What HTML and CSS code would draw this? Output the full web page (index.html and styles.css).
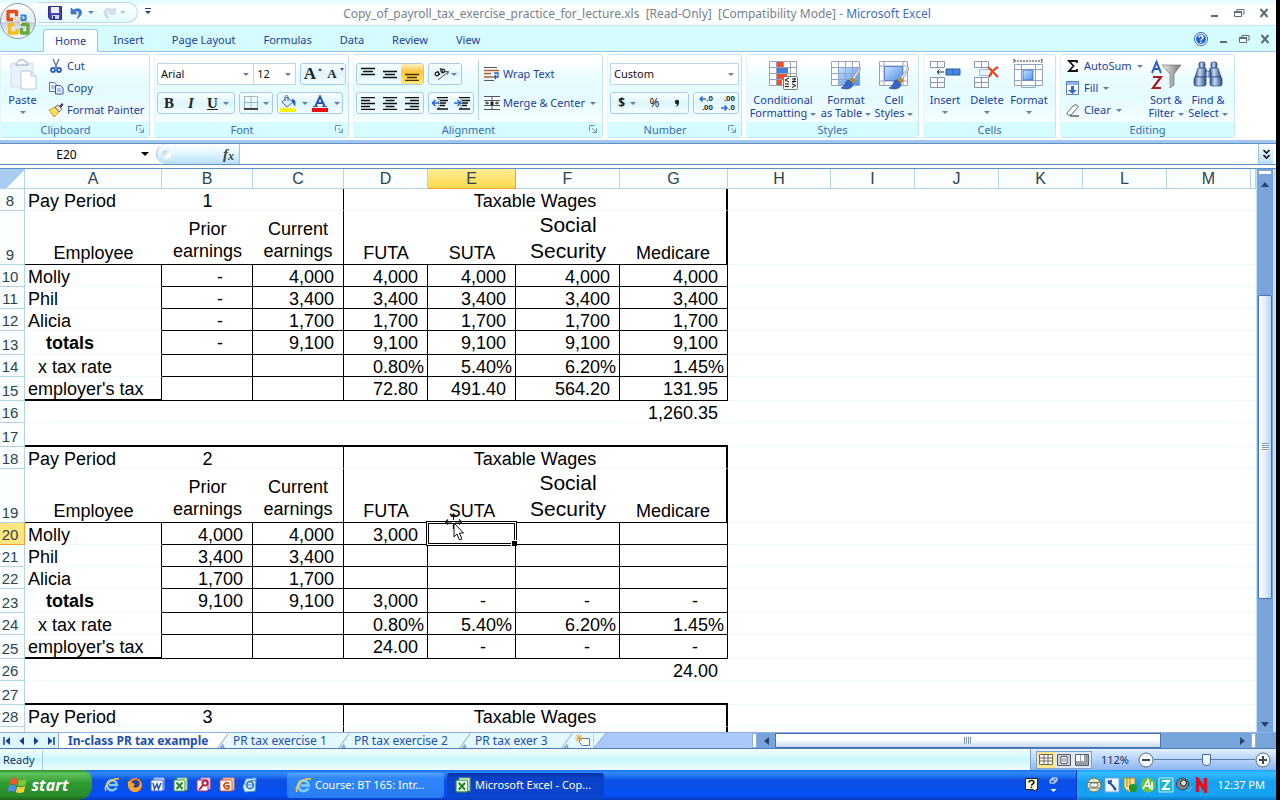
FILE: index.html
```html
<!DOCTYPE html>
<html lang="en">
<head>
  <meta charset="UTF-8">
  <meta name="viewport" content="width=device-width, initial-scale=1.0">
  <title>Copy_of_payroll_tax_exercise_practice_for_lecture.xls - Microsoft Excel</title>
  <link rel="stylesheet" href="styles.css">
</head>
<body>
  <!-- shared icons -->
  <svg class="defs" aria-hidden="true">
    <defs>
      <linearGradient id="orb" x1="0" y1="0" x2="0" y2="1"><stop offset="0" stop-color="#fff"/><stop offset=".5" stop-color="#e4e9f4"/><stop offset=".52" stop-color="#c3cde2"/><stop offset="1" stop-color="#fff"/></linearGradient>
      <linearGradient id="blue" x1="0" y1="0" x2="1" y2="1"><stop offset="0" stop-color="#c9e2ff"/><stop offset="1" stop-color="#4f8fe6"/></linearGradient>
      <linearGradient id="steel" x1="0" y1="0" x2="1" y2="0"><stop offset="0" stop-color="#2e4f86"/><stop offset=".4" stop-color="#c4dbf5"/><stop offset="1" stop-color="#27467c"/></linearGradient>
      <linearGradient id="grey" x1="0" y1="0" x2="1" y2="0"><stop offset="0" stop-color="#eee"/><stop offset="1" stop-color="#777"/></linearGradient>
    </defs>
    <symbol id="i-min" viewBox="0 0 12 12"><path d="M3 9h7" stroke="#5b6b78" stroke-width="2"/></symbol>
    <symbol id="i-restore" viewBox="0 0 12 12"><path d="M4 4V2.500h7V7H9.500" fill="none" stroke="#5b6b78"/><path d="M1.500 4.500h7v5h-7z" fill="#fff" stroke="#5b6b78"/><path d="M1 5h8" stroke="#5b6b78" stroke-width="2"/></symbol>
    <symbol id="i-close" viewBox="0 0 12 12"><path d="M2.500 2l7 8M9.500 2l-7 8" stroke="#5b6b78" stroke-width="2"/></symbol>
    <symbol id="i-launch" viewBox="0 0 9 9"><path d="M.5 6V.5H6M3 3l4 4M7.500 3.500v4h-4" fill="none" stroke="#6f93bd"/></symbol>
    <symbol id="i-brush" viewBox="0 0 20 24"><path d="M19 1l-8 11 2 2 7-11z" fill="#d9dde6" stroke="#7d8698" stroke-width=".6"/><path d="M11 11l4 3-3 4-4-3z" fill="#b98a3a"/><path d="M8 14c-4 0-3 6-8 8 5 2 12 1 12-4z" fill="#3766c4" stroke="#244a96" stroke-width=".6"/></symbol>
    <symbol id="i-ie" viewBox="0 0 16 16"><path d="M12.500 10.500A5 5 0 1 1 13 8H5" fill="none" stroke="#7fd0ff" stroke-width="2.500"/><path d="M2 14C-1 9 9 0 15 2" fill="none" stroke="#ffc63a" stroke-width="1.500"/></symbol>
    <symbol id="i-xl" viewBox="0 0 16 16"><path d="M4 1h10v12H4z" fill="#e5f6e0" stroke="#7fc06f"/><rect x="1" y="3" width="11" height="11" rx="1" fill="#f3fff0" stroke="#3a9338"/><path d="M3.500 5.500l6 6.500M9.500 5.500l-6 6.500" stroke="#238a2a" stroke-width="2"/></symbol>
    <symbol id="i-slash" viewBox="0 0 12 17"><path d="M0 17L12 0v17z" fill="#e3f8ff"/><path d="M0 17L12 .5" stroke="#7e9ecb"/><path d="M2 17l4-5 2 5z" fill="#8ea6d8"/></symbol>
  </svg>

  <header class="titlebar">
    <button class="office" aria-label="Office Button">
      <svg width="38" height="38" viewBox="0 0 38 38"><circle cx="18" cy="19" r="17.500" fill="url(#orb)" stroke="#8a94ab"/><path d="M1 20c8-3 26-3 34 0" stroke="#fff" fill="none"/>
        <g fill="none" stroke-width="3.400" stroke-linejoin="round"><path d="M13 17.500H8V9.500H16.500V14" stroke="#e2501d"/><path d="M20.500 13.500h5v4.500H21.500v-3" stroke="#2f86d8" stroke-width="2.200"/><path d="M14.500 22.500H9.500v8.500h7.500v-4" stroke="#f2bd20"/><path d="M21.500 26v5h6.500v-8.500H21" stroke="#62ac3c"/></g>
        <path d="M15 15h3v3h-3zM19 19h3v3h-3z" fill="#fff" stroke="#d08a40" stroke-width=".6"/></svg>
    </button>
    <div class="quick">
      <button aria-label="Save"><svg width="14" height="14" viewBox="0 0 14 14"><path d="M.5.500h13v13H2l-1.500-2z" fill="#4646b8" stroke="#2a2a86"/><path d="M3 1h8v6H3z" fill="#eef3ff"/><path d="M4 9h7v4H4z" fill="#cfd3e8"/><path d="M5 10h2v3H5z" fill="#2a2a86"/></svg></button>
      <button aria-label="Undo"><svg width="14" height="14" viewBox="0 0 14 14"><path d="M1 2v6h6L5 6c3-2.500 6 .5 2 6.500C14 9 13-.5 3.500 4z" fill="#3e78d8" stroke="#2c5fb8" stroke-width=".6"/></svg><i class="caret"></i></button>
      <button aria-label="Redo"><svg width="14" height="14" viewBox="0 0 14 14"><path d="M13 2v6H7l2-2C6 3.500 3 6.500 6 12.500 0 9 1-.5 10.500 4z" fill="#dbe4f1" stroke="#b6c4da" stroke-width=".8"/></svg><i class="caret faint"></i></button>
    </div>
    <button class="more" aria-label="Customize Quick Access Toolbar"><i class="caret navy"></i></button>
    <h1 class="title">Copy_of_payroll_tax_exercise_practice_for_lecture.xls &nbsp;[Read-Only] &nbsp;[Compatibility Mode] - <span>Microsoft Excel</span></h1>
    <div class="win">
      <button aria-label="Minimize"><svg width="12" height="12"><use href="#i-min"/></svg></button>
      <button aria-label="Restore"><svg width="12" height="12"><use href="#i-restore"/></svg></button>
      <button aria-label="Close"><svg width="12" height="12"><use href="#i-close"/></svg></button>
    </div>
  </header>

  <nav class="tabs">
    <button class="tab on">Home</button>
    <button class="tab">Insert</button>
    <button class="tab">Page Layout</button>
    <button class="tab">Formulas</button>
    <button class="tab">Data</button>
    <button class="tab">Review</button>
    <button class="tab">View</button>
    <div class="win small">
      <button aria-label="Help"><svg width="14" height="14" viewBox="0 0 14 14"><circle cx="7" cy="7" r="6.500" fill="#fff" stroke="#2d62c4"/><circle cx="7" cy="7" r="5" fill="#2463d6"/><path d="M5 5.500c0-3 4-2.500 4 0C9 7 7 6.500 7 8.500M7 9.500v1.500" fill="none" stroke="#fff" stroke-width="1.400"/></svg></button>
      <button aria-label="Minimize window"><svg width="12" height="12"><use href="#i-min"/></svg></button>
      <button aria-label="Restore window"><svg width="12" height="12"><use href="#i-restore"/></svg></button>
      <button aria-label="Close window"><svg width="12" height="12"><use href="#i-close"/></svg></button>
    </div>
  </nav>

  <div class="ribbon">
    <section class="group g-clip">
      <div class="tools">
        <button class="big"><svg width="30" height="32" viewBox="0 0 30 32"><path d="M3 4h22v24H3z" fill="#e9f1fa" stroke="#d3dfec"/><path d="M8 5c0-2 3-2 3-4h5c0 2 4 2 4 4v1H8z" fill="#fff" stroke="#8fa5c2"/><path d="M13 12h10l5 5v13H13z" fill="#fff" stroke="#b9c8dc"/><path d="M23 12v5h5" fill="#e5edf7" stroke="#b9c8dc"/></svg><span>Paste</span><i class="caret"></i></button>
        <div class="col">
          <button class="line"><svg width="16" height="16" viewBox="0 0 16 16"><path d="M5 1l4 9M11 1L7 10" stroke="#6b7f9b" stroke-width="1.500"/><circle cx="5" cy="12" r="2" fill="none" stroke="#2e5fc0" stroke-width="1.800"/><circle cx="11" cy="12" r="2" fill="none" stroke="#2e5fc0" stroke-width="1.800"/></svg>Cut</button>
          <button class="line"><svg width="16" height="16" viewBox="0 0 16 16"><path d="M1.500 2.500h5l2 2v7h-7z" fill="#fff" stroke="#5576b4"/><path d="M3 6h4M3 8h4" stroke="#5b8be0"/><path d="M7.500 5.500h5l2.500 2.500v6h-7.500z" fill="#f0f6ff" stroke="#35579e"/><path d="M9 9h4M9 11h4" stroke="#5b8be0"/></svg>Copy</button>
          <button class="line"><svg width="16" height="16" viewBox="0 0 16 16"><path d="M1 8l6-3 4 5-5 5C4 12 3 10 1 8z" fill="#ffe05a" stroke="#c99a1e"/><path d="M7 5l3-2 4 4-3 3z" fill="#e8e4d8" stroke="#776"/><path d="M11 4l3-3 1.500 1.500L13 6z" fill="#4b3d6e"/></svg>Format Painter</button>
        </div>
      </div>
      <h2 class="opens">Clipboard<svg width="9" height="9"><use href="#i-launch"/></svg></h2>
    </section>

    <section class="group g-font">
      <div class="tools rows">
        <div class="row tight">
          <label class="combo w-font"><select aria-label="Font"><option>Arial</option></select></label>
          <label class="combo w-size"><select aria-label="Font size"><option>12</option></select></label>
          <div class="box push">
            <button class="serif s16" aria-label="Grow font">A<i class="mark up"></i></button>
            <button class="serif s12" aria-label="Shrink font">A<i class="mark"></i></button>
          </div>
        </div>
        <div class="row">
          <div class="box">
            <button class="serif">B</button>
            <button class="serif"><i>I</i></button>
            <button class="serif arrow"><u>U</u><i class="caret"></i></button>
          </div>
          <div class="box"><button class="arrow" aria-label="Borders"><svg width="14" height="14" viewBox="0 0 14 14"><path d="M.5.500h13v12H.5zM7 .5v12M.5 6.500h13" fill="none" stroke="#777" stroke-dasharray="1 1"/><path d="M0 13h14" stroke="#111" stroke-width="1.500"/></svg><i class="caret"></i></button></div>
          <div class="box">
            <button class="arrow" aria-label="Fill color"><svg width="17" height="17" viewBox="0 0 17 17"><path d="M7 2l6 5-6 5-5-5z" fill="#dfeafc" stroke="#46669e"/><path d="M5 6V2c0-2 3-2 3 0v4" fill="none" stroke="#46669e"/><path d="M12 4c4 0 4 4 3 8-1-2-2-4-3-5z" fill="#2d62c4"/><path d="M0 13h16v4H0z" fill="#fbf215"/></svg><i class="caret"></i></button>
            <button class="arrow" aria-label="Font color"><svg width="17" height="17" viewBox="0 0 17 17"><path d="M3.500 11L8 1.500l4.500 9.500M5 8h6" fill="none" stroke="#2a55ae" stroke-width="2"/><path d="M1 11.500h5M10 11.500h5" stroke="#2a55ae"/><path d="M0 13h16v4H0z" fill="#e80d0d"/></svg><i class="caret"></i></button>
          </div>
        </div>
      </div>
      <h2 class="opens">Font<svg width="9" height="9"><use href="#i-launch"/></svg></h2>
    </section>

    <section class="group g-align">
      <div class="tools">
        <div class="rows">
          <div class="row">
            <div class="box">
              <button aria-label="Top align"><svg width="14" height="14" viewBox="0 0 14 14"><path d="M0 1.500h14M2 4.500h10M0 7.500h14" stroke="#111" stroke-width="1.500"/></svg></button>
              <button aria-label="Middle align"><svg width="14" height="14" viewBox="0 0 14 14"><path d="M0 4.500h14M2 7.500h10M0 10.500h14" stroke="#111" stroke-width="1.500"/></svg></button>
              <button class="hot" aria-label="Bottom align"><svg width="14" height="14" viewBox="0 0 14 14"><path d="M0 7.500h14M2 10.500h10M0 13.500h14" stroke="#4a3200" stroke-width="1.500"/></svg></button>
            </div>
            <div class="box"><button class="arrow" aria-label="Orientation"><svg width="15" height="14" viewBox="0 0 15 14"><path d="M4 13L14 5M11 4.500l3.500 0-1 3" fill="none" stroke="#556"/><g fill="none" stroke="#222" stroke-width="1.300"><circle cx="3" cy="7" r="1.800"/><path d="M3.500 4l2.500 4M6 1l3.500 5"/><circle cx="8.800" cy="4" r="1.800"/></g></svg><i class="caret near"></i></button></div>
          </div>
          <div class="row">
            <div class="box">
              <button aria-label="Align left"><svg width="14" height="13" viewBox="0 0 14 13"><path d="M0 .5h14M0 3.500h9M0 6.500h14M0 9.500h9M0 12.500h14" stroke="#111" stroke-width="1.500"/></svg></button>
              <button aria-label="Center"><svg width="14" height="13" viewBox="0 0 14 13"><path d="M0 .5h14M2.500 3.500h9M0 6.500h14M2.500 9.500h9M0 12.500h14" stroke="#111" stroke-width="1.500"/></svg></button>
              <button aria-label="Align right"><svg width="14" height="13" viewBox="0 0 14 13"><path d="M0 .5h14M5 3.500h9M0 6.500h14M5 9.500h9M0 12.500h14" stroke="#111" stroke-width="1.500"/></svg></button>
            </div>
            <div class="box">
              <button aria-label="Decrease indent"><svg width="16" height="13" viewBox="0 0 16 13"><path d="M5 .5h11M8 3.500h8M8 6h6M8 8.500h5M5 12h11" stroke="#111" stroke-width="1.400"/><path d="M7 6H1M3.500 3L.5 6l3 3" fill="none" stroke="#2d6bd8" stroke-width="1.600"/><path d="M7 0v13" stroke="#333" stroke-dasharray="1 1"/></svg></button>
              <button aria-label="Increase indent"><svg width="16" height="13" viewBox="0 0 16 13"><path d="M5 .5h11M8 3.500h8M8 6h6M8 8.500h5M5 12h11" stroke="#111" stroke-width="1.400"/><path d="M0 6h6M3.500 3l3 3-3 3" fill="none" stroke="#2d6bd8" stroke-width="1.600"/><path d="M7 0v13" stroke="#333" stroke-dasharray="1 1"/></svg></button>
            </div>
          </div>
        </div>
        <div class="rows wide">
          <button class="line"><svg width="16" height="16" viewBox="0 0 16 16"><path d="M0 1.500h13M0 14.500h10" stroke="#555"/><path d="M0 4.500h15M0 7.500h7M0 11h9" stroke="#b0602a" stroke-width="1.500"/><path d="M10 7h4v4h-3M12 9l-2 2 2 2" fill="none" stroke="#2d5bb8" stroke-width="1.300"/></svg>Wrap Text</button>
          <button class="line"><svg width="16" height="16" viewBox="0 0 16 16"><path d="M.5 1.500h15v13H.5z" fill="#fff"/><path d="M0 1.500h16M0 5.500h16M0 10.500h16M0 14.500h16M8 1v4M8 11v4" stroke="#46556e"/><path d="M1 8h4M15 8h-4M3 6.500v3M13 6.500v3" stroke="#222"/><path d="M6.500 6.500h3v3.500h-3z" fill="#222"/></svg>Merge &amp; Center<i class="caret"></i></button>
        </div>
      </div>
      <h2 class="opens">Alignment<svg width="9" height="9"><use href="#i-launch"/></svg></h2>
    </section>

    <section class="group g-num">
      <div class="tools rows">
        <label class="combo"><select aria-label="Number format"><option>Custom</option></select></label>
        <div class="row">
          <div class="box grow">
            <button class="bold arrow">$<i class="caret"></i></button>
            <button>%</button>
            <button class="bold" aria-label="Comma style"><svg width="6" height="9" viewBox="0 0 6 9"><circle cx="3" cy="3" r="2.200" fill="#222"/><path d="M5 3c0 3-1 4-3 5 1-2 1-3 1-4z" fill="#222"/></svg></button>
          </div>
          <div class="box">
            <button class="dec"><span><svg width="7" height="6" viewBox="0 0 7 6"><path d="M7 3H1M3.500 .5L1 3l2.500 2.500" fill="none" stroke="#2d6bd8" stroke-width="1.500"/></svg>.0</span><span>.00</span></button>
            <button class="dec"><span>.00</span><span><svg width="7" height="6" viewBox="0 0 7 6"><path d="M0 3h6M3.500 .5L6 3 3.500 5.500" fill="none" stroke="#2d6bd8" stroke-width="1.500"/></svg>.0</span></button>
          </div>
        </div>
      </div>
      <h2 class="opens">Number<svg width="9" height="9"><use href="#i-launch"/></svg></h2>
    </section>

    <section class="group g-styles">
      <div class="tools">
        <button class="big w-cond"><svg width="30" height="32" viewBox="0 0 30 32"><path d="M1.500 2.500h27v24h-27zM8.500 2v24M15.500 2v24M22.500 2v24M2 8.500h26M2 14.500h26M2 20.500h26" fill="#fff" stroke="#97a3bd"/><path d="M9 3h6v5H9zM9 15h10v5H9zM9 21h5v5H9z" fill="#f4512b"/><path d="M9 9h11v5H9z" fill="#3f7fe0"/><rect x="15.500" y="17.500" width="14" height="13" rx="1" fill="#f4f4f4" stroke="#777"/><path d="M21 19l-4 2 4 2M17 25h4M17 27.500h4M24 20h4M24 22.500h4M27 19l-2 5M24 25l4 1.500-4 2" fill="none" stroke="#111"/></svg><span>Conditional</span><span>Formatting<i class="caret"></i></span></button>
        <button class="big w-table"><svg width="32" height="32" viewBox="0 0 32 32"><path d="M1.500 2.500h28v24h-28z" fill="#fff" stroke="#97a3bd"/><path d="M8 9h21v17H8z" fill="url(#blue)"/><path d="M8.500 2v24M15.500 2v24M22.500 2v24M2 8.500h27M2 14.500h27M2 20.500h27" stroke="#8fa4c8"/><use href="#i-brush" x="11" y="7" width="20" height="24"/></svg><span>Format</span><span>as Table<i class="caret"></i></span></button>
        <button class="big w-cell"><svg width="32" height="32" viewBox="0 0 32 32"><path d="M1.500 2.500h28v24h-28zM6 2v24M25 2v24M2 7h27M2 22h27" fill="#fff" stroke="#97a3bd"/><path d="M6.500 7.500h18v14h-18z" fill="url(#blue)" stroke="#5c84c4"/><use href="#i-brush" x="11" y="7" width="20" height="24"/></svg><span>Cell</span><span>Styles<i class="caret"></i></span></button>
      </div>
      <h2>Styles</h2>
    </section>

    <section class="group g-cells">
      <div class="tools">
        <button class="big w-cell"><svg width="32" height="32" viewBox="0 0 32 32"><path d="M1.500 2.500h14v6h-14zM8.500 2v6M1.500 18.500h14v10h-14zM8.500 18v10M1.500 23.500h14" fill="#fff" stroke="#8b97b0"/><path d="M17 10h14v6H17z" fill="#4a86e0" stroke="#2c5cae"/><path d="M24 10v6" stroke="#2c5cae"/><path d="M15 13H8M10.500 10.500L8 13l2.500 2.500" fill="none" stroke="#223"/></svg><span>Insert</span><i class="caret"></i></button>
        <button class="big w-cell"><svg width="32" height="32" viewBox="0 0 32 32"><path d="M3.500 2.500h14v6h-14zM10.500 2v6M3.500 18.500h14v10h-14zM10.500 18v10M3.500 23.500h14" fill="#fff" stroke="#8b97b0"/><path d="M8.500 10.500h12v6h-12z" fill="#eaf2ff" stroke="#4a86e0" stroke-dasharray="1 1"/><path d="M17 8l10 10M27 8c-4 2-7 6-9 10" stroke="#f0401c" stroke-width="2.200" fill="none"/></svg><span>Delete</span><i class="caret"></i></button>
        <button class="big w-cell"><svg width="32" height="32" viewBox="0 0 32 32"><path d="M1 2h28M1 0v4M29 0v4" stroke="#333" stroke-dasharray="2 1"/><path d="M1.500 5.500h28v21h-28zM8.500 5v23M22.500 5v23M2 10.500h27M2 21.500h27M8.500 28.500h14" fill="#fff" stroke="#97a3bd"/><path d="M10 11h10v10H10z" fill="url(#blue)" stroke="#3f7fe0"/></svg><span>Format</span><i class="caret"></i></button>
      </div>
      <h2>Cells</h2>
    </section>

    <section class="group g-edit">
      <div class="tools">
        <div class="col">
          <button class="line"><svg width="16" height="16" viewBox="0 0 16 16"><path d="M12 5V3H4l4.500 5L4 13h8v-2" fill="none" stroke="#111" stroke-width="1.800"/></svg>AutoSum<i class="caret"></i></button>
          <button class="line"><svg width="16" height="16" viewBox="0 0 16 16"><path d="M1.500 1.500h12v13h-12z" fill="#fff" stroke="#5b7dbb"/><path d="M2 2h11v3H2z" fill="#8fb4ee"/><path d="M6 6h3v4h3l-4.500 4L3 10h3z" fill="#2d6bd8"/></svg>Fill<i class="caret"></i></button>
          <button class="line"><svg width="16" height="16" viewBox="0 0 16 16"><path d="M2 11l6-7c2-2 6-1 5 1l-6 7c-2 2-6 1-5-1z" fill="#fff" stroke="#57627a"/><path d="M5 14h9" stroke="#111"/></svg>Clear<i class="caret"></i></button>
        </div>
        <button class="big w-cell"><svg width="32" height="32" viewBox="0 0 32 32"><path d="M2 14L6.500 3 11 14M4 10h5" fill="none" stroke="#2d5fc4" stroke-width="2"/><path d="M3 18h8L3 29h8" fill="none" stroke="#a81c24" stroke-width="2.200"/><path d="M12 6h19l-7 9v11l-4 3V15z" fill="url(#grey)" stroke="#777" stroke-width=".7"/></svg><span>Sort &amp;</span><span>Filter<i class="caret"></i></span></button>
        <button class="big w-cell"><svg width="32" height="32" viewBox="0 0 32 32"><g fill="url(#steel)" stroke="#27467c" stroke-width=".7"><rect x="7" y="3" width="6" height="6" rx="2"/><rect x="19" y="3" width="6" height="6" rx="2"/><path d="M6 9h8l1 9H3z"/><path d="M18 9h8l3 9H17z"/><rect x="2" y="18" width="12" height="9" rx="2"/><rect x="18" y="18" width="12" height="9" rx="2"/><path d="M13 12h6v6h-6z"/></g></svg><span>Find &amp;</span><span>Select<i class="caret"></i></span></button>
      </div>
      <h2>Editing</h2>
    </section>
  </div>

  <div class="formula">
    <input class="name" type="text" value="E20" aria-label="Name Box">
    <i class="caret black"></i>
    <div class="fx"><i class="dot"></i><button aria-label="Insert Function"><i>f</i><small><i>x</i></small></button></div>
    <input class="entry" type="text" aria-label="Formula Bar">
    <button class="expand" aria-label="Expand Formula Bar"><svg width="9" height="11" viewBox="0 0 9 11"><path d="M1.500 1l3 3 3-3M1.500 6l3 3 3-3" fill="none" stroke="#111" stroke-width="1.600"/></svg></button>
  </div>

  <main class="work">
    <div class="sheet">
      <table>
        <colgroup><col class="c-row"><col class="c-a"><col class="c-b"><col class="c-b"><col class="c-d"><col class="c-e"><col class="c-f"><col class="c-g"><col class="c-h"><col class="c-d"><col class="c-d"><col class="c-d"><col class="c-d"><col class="c-d"><col></colgroup>
        <thead>
          <tr><th class="corner"></th><th>A</th><th>B</th><th>C</th><th>D</th><th class="sel">E</th><th>F</th><th>G</th><th>H</th><th>I</th><th>J</th><th>K</th><th>L</th><th>M</th><th></th></tr>
        </thead>
        <tbody>
          <tr><th>8</th><td>Pay Period</td><td class="mid">1</td><td class="r"></td><td class="mid rr" colspan="4">Taxable Wages</td><td colspan="7"></td></tr>
          <tr class="names"><th>9</th><td class="b">Employee</td><td class="b two">Prior<br>earnings</td><td class="b r two">Current<br>earnings</td><td class="b">FUTA</td><td class="b">SUTA</td><td class="b large">Social<br>Security</td><td class="b rr">Medicare</td><td colspan="7"></td></tr>
          <tr class="data"><th>10</th><td>Molly</td><td class="dash">-</td><td>4,000</td><td>4,000</td><td>4,000</td><td>4,000</td><td>4,000</td><td colspan="7"></td></tr>
          <tr class="data"><th>11</th><td>Phil</td><td class="dash">-</td><td>3,400</td><td>3,400</td><td>3,400</td><td>3,400</td><td>3,400</td><td colspan="7"></td></tr>
          <tr class="data"><th>12</th><td>Alicia</td><td class="dash">-</td><td>1,700</td><td>1,700</td><td>1,700</td><td>1,700</td><td>1,700</td><td colspan="7"></td></tr>
          <tr class="data tall"><th>13</th><td class="total">totals</td><td class="dash">-</td><td>9,100</td><td>9,100</td><td>9,100</td><td>9,100</td><td>9,100</td><td colspan="7"></td></tr>
          <tr class="data pct"><th>14</th><td class="rate">x tax rate</td><td></td><td></td><td>0.80%</td><td>5.40%</td><td>6.20%</td><td>1.45%</td><td colspan="7"></td></tr>
          <tr class="data tall"><th>15</th><td class="bb">employer's tax</td><td></td><td></td><td>72.80</td><td>491.40</td><td>564.20</td><td>131.95</td><td colspan="7"></td></tr>
          <tr><th>16</th><td colspan="6"></td><td class="num">1,260.35</td><td colspan="7"></td></tr>
          <tr class="tall"><th>17</th><td class="bb" colspan="7"></td><td colspan="7"></td></tr>
          <tr><th>18</th><td>Pay Period</td><td class="mid">2</td><td class="r"></td><td class="mid rr" colspan="4">Taxable Wages</td><td colspan="7"></td></tr>
          <tr class="names"><th>19</th><td class="b">Employee</td><td class="b two">Prior<br>earnings</td><td class="b r two">Current<br>earnings</td><td class="b">FUTA</td><td class="b">SUTA</td><td class="b large">Social<br>Security</td><td class="b rr">Medicare</td><td colspan="7"></td></tr>
          <tr class="data"><th class="sel">20</th><td>Molly</td><td>4,000</td><td>4,000</td><td>3,000</td>
            <td class="active"><div class="cursor-box"></div><svg class="pointer" width="24" height="30" viewBox="0 0 24 30"><path d="M2 9h6M11 9h6M9.500 1v6M9.500 11v5M4 6.500L1.500 9 4 11.500M15 6.500L17.500 9 15 11.500M7 3.500L9.500 1 12 3.500" fill="none" stroke="#111" stroke-width="1.200"/><path d="M10 10v14l3-3 2.500 6 2.500-1-2.500-6h4z" fill="#fff" stroke="#111"/></svg></td>
            <td></td><td></td><td colspan="7"></td></tr>
          <tr class="data"><th>21</th><td>Phil</td><td>3,400</td><td>3,400</td><td></td><td></td><td></td><td></td><td colspan="7"></td></tr>
          <tr class="data"><th>22</th><td>Alicia</td><td>1,700</td><td>1,700</td><td></td><td></td><td></td><td></td><td colspan="7"></td></tr>
          <tr class="data tall"><th>23</th><td class="total">totals</td><td>9,100</td><td>9,100</td><td>3,000</td><td class="dash">-</td><td class="dash">-</td><td class="dash">-</td><td colspan="7"></td></tr>
          <tr class="data pct"><th>24</th><td class="rate">x tax rate</td><td></td><td></td><td>0.80%</td><td>5.40%</td><td>6.20%</td><td>1.45%</td><td colspan="7"></td></tr>
          <tr class="data tall"><th>25</th><td class="bb">employer's tax</td><td></td><td></td><td>24.00</td><td class="dash">-</td><td class="dash">-</td><td class="dash">-</td><td colspan="7"></td></tr>
          <tr><th>26</th><td colspan="6"></td><td class="num">24.00</td><td colspan="7"></td></tr>
          <tr class="tall"><th>27</th><td class="bb" colspan="7"></td><td colspan="7"></td></tr>
          <tr><th>28</th><td>Pay Period</td><td class="mid">3</td><td class="r"></td><td class="mid rr" colspan="4">Taxable Wages</td><td colspan="7"></td></tr>
          <tr><th></th><td colspan="3" class="r"></td><td colspan="4" class="rr"></td><td colspan="7"></td></tr>
        </tbody>
      </table>
    </div>
    <div class="vscroll">
      <div class="split"></div>
      <button aria-label="Scroll up"><i class="tri up"></i></button>
      <div class="track"><div class="thumb"><i></i></div></div>
      <button aria-label="Scroll down"><i class="tri down"></i></button>
    </div>
  </main>

  <div class="sheetbar">
    <div class="steps">
      <button aria-label="First sheet"><svg width="8" height="8" viewBox="0 0 8 8"><path d="M1 0v8" stroke="#123c9c" stroke-width="1.500"/><path d="M7 0v8L2.500 4z" fill="#123c9c"/></svg></button>
      <button aria-label="Previous sheet"><svg width="8" height="8" viewBox="0 0 8 8"><path d="M6 0v8L1.500 4z" fill="#123c9c"/></svg></button>
      <button aria-label="Next sheet"><svg width="8" height="8" viewBox="0 0 8 8"><path d="M2 0v8l4.500-4z" fill="#123c9c"/></svg></button>
      <button aria-label="Last sheet"><svg width="8" height="8" viewBox="0 0 8 8"><path d="M7 0v8" stroke="#123c9c" stroke-width="1.500"/><path d="M1 0v8l4.500-4z" fill="#123c9c"/></svg></button>
    </div>
    <button class="leaf on">In-class PR tax example</button>
    <svg class="white" width="12" height="17"><use href="#i-slash"/></svg>
    <button class="leaf">PR tax exercise 1</button>
    <svg width="12" height="17"><use href="#i-slash"/></svg>
    <button class="leaf">PR tax exercise 2</button>
    <svg width="12" height="17"><use href="#i-slash"/></svg>
    <button class="leaf short">PR tax exer 3</button>
    <svg width="12" height="17"><use href="#i-slash"/></svg>
    <button class="leaf new" aria-label="Insert Worksheet"><svg width="16" height="13" viewBox="0 0 16 13"><path d="M4.500 4.500h10v7h-7l-3-3z" fill="#fff" stroke="#5c77b0"/><path d="M4 0v8M0 4h8M1 1l6 6M7 1L1 7" stroke="#e8a22c"/></svg></button>
    <svg class="end" width="14" height="17" viewBox="0 0 14 17"><path d="M0 0h14L0 17z" fill="#e3f8ff"/><path d="M14 0L0 17" stroke="#7e9ecb"/></svg>
    <div class="hscroll">
      <div class="split"></div>
      <button aria-label="Scroll left"><i class="tri left"></i></button>
      <div class="track"><div class="thumb"><i></i></div></div>
      <button aria-label="Scroll right"><i class="tri right"></i></button>
      <div class="split"></div>
    </div>
  </div>

  <footer class="status">
    <span class="ready">Ready</span>
    <div class="view">
      <div class="modes">
        <button class="on" aria-label="Normal"><svg width="14" height="12" viewBox="0 0 14 12"><path d="M.5.500h13v10H.5zM5 1v10M9 1v10M1 4h12M1 7h12" fill="#fff" stroke="#6c6a55"/></svg></button>
        <button aria-label="Page Layout view"><svg width="14" height="12" viewBox="0 0 14 12"><path d="M.5.500h13v11H.5z" fill="#ccd0d4" stroke="#55606a"/><path d="M4 2.500h6v7H4z" fill="#fff" stroke="#55606a"/><path d="M5 5h4M5 7h4" stroke="#888"/></svg></button>
        <button aria-label="Page Break Preview"><svg width="14" height="12" viewBox="0 0 14 12"><path d="M.5.500h13v11H.5z" fill="#9aa0a6" stroke="#55606a"/><path d="M1 1h4v6H1zM6 1h3v6H6z" fill="#fff"/></svg></button>
      </div>
      <span class="pc">112%</span>
      <button class="round" aria-label="Zoom out"><svg width="16" height="16" viewBox="0 0 16 16"><circle cx="8" cy="8" r="7" fill="#f4f9ff" stroke="#596c86"/><path d="M4 8h8" stroke="#445" stroke-width="2"/></svg></button>
      <input type="range" min="10" max="190" value="103" aria-label="Zoom">
      <button class="round" aria-label="Zoom in"><svg width="16" height="16" viewBox="0 0 16 16"><circle cx="8" cy="8" r="7" fill="#f4f9ff" stroke="#596c86"/><path d="M4 8h8M8 4v8" stroke="#445" stroke-width="2"/></svg></button>
    </div>
  </footer>

  <div class="taskbar">
    <button class="start"><svg width="20" height="20" viewBox="0 0 20 20"><path d="M3 4c3-2 5-1 7 0L8.500 10c-2-1-4-1.500-7 0z" fill="#f2572b"/><path d="M11 4.500c3 1 5 1 8-.5l-1.500 6c-3 1.500-5 1-8 .3z" fill="#7cc63c"/><path d="M1.200 11c3-1.500 5-1 7 .3L6.700 17c-2-1-4-1.500-7 0z" fill="#4d8df0"/><path d="M9.300 11.500c3 1 5 1 8-.5l-1.500 6c-3 1.500-5 1-8 .3z" fill="#fbd035"/></svg>start</button>
    <div class="launch">
      <button aria-label="Internet Explorer"><svg width="16" height="16"><use href="#i-ie"/></svg></button>
      <button aria-label="Firefox"><svg width="16" height="16" viewBox="0 0 16 16"><circle cx="8" cy="8" r="7" fill="#f08a1d"/><circle cx="8.500" cy="7" r="4" fill="#2b3f94"/><path d="M1 4c3 1 4 2 7 3l-2 3c4 2 7-1 8-5 2 5-1 10-6 10S0 10 1 4z" fill="#f9a62c"/></svg></button>
      <button aria-label="Word"><svg width="16" height="16" viewBox="0 0 16 16"><path d="M4 1h10v12H4z" fill="#e6eefc" stroke="#8aaae8"/><rect x="1" y="3" width="12" height="11" rx="1" fill="#f5f8ff" stroke="#3d64b8"/><path d="M3 6l1.500 6L7 7l1.500 5L11 6" fill="none" stroke="#2c56b0" stroke-width="1.500"/></svg></button>
      <button aria-label="Excel"><svg width="16" height="16"><use href="#i-xl"/></svg></button>
      <button aria-label="Access"><svg width="16" height="16" viewBox="0 0 16 16"><path d="M5 1h9v11H5z" fill="#fbe3ec" stroke="#d888a4"/><rect x="1" y="3" width="11" height="11" rx="1" fill="#fff" stroke="#b8305c"/><circle cx="9" cy="6" r="2.500" fill="none" stroke="#b8204c" stroke-width="2"/><path d="M7 8l-4 5" stroke="#b8204c" stroke-width="2"/></svg></button>
      <button aria-label="PowerPoint"><svg width="16" height="16" viewBox="0 0 16 16"><path d="M4 1h11v12H4z" fill="#fbe0d0" stroke="#e88a5c"/><rect x="1" y="3" width="12" height="11" rx="1" fill="#fff" stroke="#d8501c"/><path d="M10 6.500a3 3 0 1 0 0 4.500V9H7" fill="none" stroke="#d8501c" stroke-width="1.800"/></svg></button>
      <button aria-label="Outlook Express"><svg width="16" height="16" viewBox="0 0 16 16"><path d="M4 2l10-1-1 13-10 1-2-5z" fill="#dff1ff" stroke="#5aa6e0"/><circle cx="8" cy="8" r="3.500" fill="none" stroke="#2a7fce" stroke-width="1.800"/><path d="M5 8h6M9 3l5 1" stroke="#2a7fce"/></svg></button>
    </div>
    <div class="tasks">
      <button class="task"><svg width="17" height="17"><use href="#i-ie"/></svg>Course: BT 165: Intr...</button>
      <button class="task on"><svg width="17" height="17"><use href="#i-xl"/></svg>Microsoft Excel - Cop...</button>
    </div>
    <div class="lang">
      <svg width="13" height="14" viewBox="0 0 13 14"><path d="M.5.500h12v11h-1.500v2l-3-2H.5z" fill="#fff8d8" stroke="#222"/><path d="M4 4.500c0-3 5-2.500 5 0C9 6 6.500 6 6.500 7.500M6.500 8.500V10" fill="none" stroke="#111" stroke-width="1.500"/></svg>
      <svg width="9" height="16" viewBox="0 0 9 16"><path d="M3 3V1h5v3H6M1 3h5v3H1z" fill="none" stroke="#fff"/><path d="M1.500 12h6l-3 3z" fill="#fff"/></svg>
    </div>
    <div class="tray">
      <svg width="16" height="16" viewBox="0 0 16 16"><circle cx="8" cy="8" r="7" fill="#e8e4cc" stroke="#66705c"/><path d="M2 5.500h12M2 11h12" stroke="#66705c"/><rect x="4" y="6" width="8" height="4" rx="2" fill="#fff" stroke="#77806c"/></svg>
      <svg width="16" height="16" viewBox="0 0 16 16"><path d="M1 1h14v14H1z" fill="#f2f8ff" stroke="#6ea0dc"/><path d="M4 3.500l7 8M4 6a2.500 2.500 0 0 0 3-3" fill="none" stroke="#234f9c" stroke-width="2"/><circle cx="11" cy="12" r="1.500" fill="#234f9c"/></svg>
      <svg width="16" height="16" viewBox="0 0 16 16"><path d="M2 1h11v8c0 3-3 4-5.500 6C5 13 2 12 2 9z" fill="#f6e08a" stroke="#a8862a"/><path d="M5 1v9M8 1v9" stroke="#a8862a"/><circle cx="11" cy="11" r="4" fill="#1c9a2c"/></svg>
      <svg width="16" height="16" viewBox="0 0 16 16"><circle cx="8" cy="8" r="7.500" fill="#6ac24a"/><path d="M3 12l5-9 2 9M5 9h8M12 5v8" fill="none" stroke="#fff" stroke-width="1.500"/></svg>
      <svg width="16" height="16" viewBox="0 0 16 16"><path d="M1 1h14v14H1z" fill="#22b6c8" stroke="#bdf2ff"/><path d="M4 4h7l-6 8h7" fill="none" stroke="#fff" stroke-width="2"/></svg>
      <svg width="16" height="16" viewBox="0 0 16 16"><circle cx="6.500" cy="7" r="6" fill="#7e8488" stroke="#3c4248"/><circle cx="7.500" cy="6" r="3" fill="#d9dde0" stroke="#222"/><path d="M11 14c2 0 4-2 4-4" fill="none" stroke="#8fd0ff"/></svg>
      <svg width="16" height="16" viewBox="0 0 16 16"><path d="M3.500 15V2l8 12V1" fill="none" stroke="#e01222" stroke-width="3.500"/></svg>
      <time>12:37 PM</time>
    </div>
  </div>
</body>
</html>
```
FILE: styles.css
```css
* {margin: 0;padding: 0;box-sizing: border-box;}
body {
  height: 100vh;
  display: flex;
  flex-direction: column;
  overflow: hidden;
  border-right: 4px solid #000;
  background-color: #fff;
  color: #1a3f9f;
  font-family: "Noto Sans", "Open Sans", sans-serif;
  font-size: 11px;
  line-height: 14px;
}
button, input, select {font: inherit;color: inherit;border: 0;background: none;outline: 0;}
button {display: flex;align-items: center;justify-content: center;white-space: nowrap;}
svg {display: block;flex: none;}
.defs {position: absolute;width: 0;height: 0;}

.caret {display: inline-block;flex: none;width: 0;height: 0;border: 3px solid transparent;border-top-color: #5f7ea8;border-bottom: 0;margin-left: 4px;vertical-align: middle;}
.caret.faint {border-top-color: #b9c6d8;}
.caret.black {border-width: 4px;border-top-color: #000;border-bottom: 0;}
.caret.navy {margin: 0;border-top-color: #22457f;position: relative;}
.caret.navy::before {content: "";position: absolute;left: -3px;top: -6px;width: 6px;height: 1px;background-color: #22457f;}

/* title bar */
.titlebar {position: relative;flex: none;display: flex;align-items: center;height: 26px;padding-left: 38px;background: linear-gradient(#dffcff, #fff 30%, #fdffff);border-bottom: 1px solid #c6e6f5;}
.office {position: absolute;left: 0;top: 2px;z-index: 2;}
.quick {display: flex;align-items: center;gap: 8px;height: 21px;width: 100px;padding-left: 10px;border: 1px solid #b9d7ef;border-left: 0;border-radius: 0 11px 11px 0;background: linear-gradient(#fff, #e3faff);}
.more {width: 20px;height: 20px;}
.title {flex: 1;text-align: center;font-size: 12px;font-weight: normal;line-height: 18px;color: #75828e;white-space: nowrap;padding: 2px 92px 0 0;}
.title span {color: #3b6fc4;}
.win {display: flex;gap: 13px;padding-right: 6px;}
.win.small {margin-left: auto;gap: 9px;padding-right: 5px;}

/* ribbon tabs */
.tabs {flex: none;display: flex;align-items: center;height: 26px;padding-left: 43px;background-color: #d5fcff;border-bottom: 1px solid #9cc3ee;}
.tab {height: 23px;padding: 0 14px;margin-top: 2px;}
.tab.on {padding: 0 11px;margin-right: 1px;margin-bottom: -2px;border: 1px solid #9cc3ee;border-bottom: 0;border-radius: 3px 3px 0 0;background-color: #fbffff;}

/* ribbon */
.ribbon {flex: none;display: flex;gap: 4px;padding: 2px 0;background-color: #fff;border-bottom: 3px solid #a3c6ee;}
.group {display: flex;flex-direction: column;height: 84px;border: 1px solid #c5e5f3;border-left-color: #e4f6fc;border-radius: 3px;background: linear-gradient(#fff 10%, #ebfdff 25%, #e4fbff 50%, #fff);}
.group h2 {position: relative;height: 15px;font-size: 11px;font-weight: normal;text-align: center;line-height: 15px;color: #3b6cb4;background-color: #d5fcff;}
.group .opens {padding-right: 19px;}
.group h2 svg {position: absolute;right: 4px;top: 3px;}
.tools {flex: 1;display: flex;}
.g-clip {width: 150px;}
.g-font {width: 195px;}
.g-align {width: 250px;}
.g-num {width: 135px;}
.g-styles {width: 173px;}
.g-cells {width: 133px;}
.g-edit {width: 175px;}
.col {display: flex;flex-direction: column;padding-left: 4px;}
.line {height: 22px;gap: 3px;justify-content: flex-start;}
.line .caret {margin-left: 2px;}
.big {flex-direction: column;justify-content: flex-start;width: 43px;padding-top: 4px;line-height: 13px;}
.big svg {margin-bottom: 2px;}
.big > .caret {margin: 5px 0 0;}
.big span .caret {margin-left: 3px;}
.w-cond {width: 72px;}
.w-table {width: 54px;}
.w-cell {width: 42px;}
.g-edit .col {width: 84px;}
.rows {display: flex;flex-direction: column;gap: 7px;padding: 8px 2px 0;}
.row {display: flex;gap: 4px;}
.row.tight {gap: 0;}
.push {margin-left: 4px;}
.wide {margin: 5px 0 2px 2px;padding: 3px 5px 0;border-left: 1px solid #b3d2ec;}
.box {display: flex;height: 22px;border: 1px solid #a9cbea;border-radius: 3px;background: linear-gradient(#f8ffff, #dff6ff 50%, #f3fdff);color: #222;}
.box button {width: 22px;position: relative;}
.box button.arrow {width: 32px;}
.box button.arrow .caret {margin-left: 5px;}
.box button.arrow .near {margin-left: 2px;}
.box.grow {flex: 1;justify-content: space-around;font-size: 12px;}
.box .hot {background: linear-gradient(#fff0c0, #ffc43a 40%, #ffec7e);}
.serif {font-family: "Liberation Serif", serif;font-weight: bold;font-size: 15px;}
.box .s16, .box .s12 {font-size: 17px;padding-right: 4px;}
.box .s12 {font-size: 13px;}
.mark {position: absolute;right: 1px;top: 4px;border: 2px solid transparent;border-top: 3px solid #2d55a0;border-bottom: 0;}
.mark.up {border-bottom: 3px solid #2d55a0;border-top: 0;}
.bold {font-weight: bold;}
.box .dec {flex-direction: column;align-items: flex-end;padding-right: 3px;font-family: "Liberation Sans", Arial, sans-serif;font-size: 8px;line-height: 9px;font-weight: bold;}
.dec span {display: flex;align-items: center;}
.combo {position: relative;display: block;height: 22px;border: 1px solid #b9d7ef;background-color: #fff;color: #111;}
.combo select {appearance: none;width: 100%;height: 20px;padding-left: 3px;}
.combo::after {content: "";position: absolute;right: 4px;top: 9px;border: 3px solid transparent;border-top-color: #5f7ea8;border-bottom: 0;}
.w-font {width: 98px;}
.w-size {width: 43px;margin-left: -1px;}

/* formula bar */
.formula {flex: none;display: flex;align-items: center;height: 22px;color: #000;border: 1px solid #5f8fc4;border-width: 1px 0;}
.name {width: 133px;height: 20px;text-align: center;font-size: 12px;}
.formula > .caret {margin: 0 7px 0 8px;}
.fx {display: flex;align-items: center;justify-content: space-between;width: 84px;height: 20px;padding: 0 5px;border: 1px solid #9cc3ee;border-width: 0 1px 0 1px;border-radius: 10px 0 0 10px;background: linear-gradient(#fff, #e0f6ff 50%, #b7ddf8);}
.fx .dot {width: 9px;height: 9px;border-radius: 5px;background: linear-gradient(135deg, #b9c4cf, #fff 70%);}
.fx button {font-family: "Liberation Serif", serif;font-size: 15px;font-weight: bold;color: #444;}
.fx small {font-size: 12px;padding-top: 3px;}
.entry {flex: 1;height: 20px;padding: 0 4px;}
.expand {width: 15px;height: 20px;margin-right: 3px;border-left: 1px solid #9cc3ee;background: linear-gradient(#fff, #b7ddf8);}

/* worksheet */
.work {flex: 1;min-height: 0;display: flex;margin-top: 3px;border-top: 1px solid #5f8fc4;}
.sheet {flex: 1;min-width: 0;overflow: hidden;}
table {width: 100%;table-layout: fixed;border-collapse: separate;border-spacing: 0;font-family: "Liberation Sans", Arial, sans-serif;font-size: 18px;line-height: 18px;color: #000;}
.c-row {width: 25px;}
.c-a {width: 137px;}
.c-b {width: 91px;}
.c-d {width: 84px;}
.c-e {width: 88px;}
.c-f {width: 104px;}
.c-g {width: 108px;}
.c-h {width: 103px;}
th {font-weight: normal;font-size: 16px;color: #2c4450;background-color: #fafeff;border-right: 1px solid #b4d3e6;border-bottom: 1px solid #b4d3e6;}
thead th {height: 20px;line-height: 19px;}
tbody th {font-size: 15px;line-height: 18px;vertical-align: bottom;padding-right: 4px;}
.corner {background: linear-gradient(135deg, #a9cdf0 60%, #fff 60%);}
th.sel {background: linear-gradient(#ffec96, #fbd84e);border-color: #f0a030;}
tbody th.sel {background: #ffe680;}
tbody tr {height: 22px;}
tbody .tall {height: 24px;}
tbody .names {height: 54px;}
td {position: relative;vertical-align: top;padding: 3px 0 0 3px;white-space: nowrap;border-bottom: 1px solid #f1f9fa;}
.mid {text-align: center;padding-left: 0;}
.num {text-align: right;padding-right: 10px;}
.r {border-right: 1px solid #000;}
.rr {border-right: 2px solid #000;}
.b {border-bottom: 1px solid #000;}
.bb {border-bottom: 2px solid #000;}
.names td {text-align: center;vertical-align: bottom;line-height: 21px;padding: 0;}
.names .two {line-height: 22px;padding-bottom: 2px;}
.names .large {font-size: 21px;line-height: 26px;}
.data td {border-right: 1px solid #000;}
.data td:not(:nth-child(2)):not(:last-child) {text-align: right;padding-right: 9px;border-bottom: 1px solid #000;}
.data td:last-child {border-right: 0;}
.pct td:not(:nth-child(2)):not(:last-child) {padding-right: 3px;}
.dash::after {content: "";display: inline-block;width: 20px;}
.total {font-weight: bold;}
.data .total {padding-left: 21px;}
.data .rate {padding-left: 13px;}
.cursor-box {position: absolute;left: -2px;top: -2px;right: -2px;bottom: -2px;border: 3px double #000;background-color: #fff;}
.cursor-box::after {content: "";position: absolute;right: -4px;bottom: -4px;width: 5px;height: 5px;background-color: #000;border: 1px solid #fff;}
.pointer {position: absolute;left: 16px;top: -10px;z-index: 1;}

/* scroll bars */
.vscroll {flex: none;width: 20px;display: flex;flex-direction: column;border-right: 3px solid #bfe2fb;border-left: 1px solid #bfe2fb;background-color: #78a4dc;}
.vscroll button {height: 16px;}
.vscroll .split {height: 5px;margin: 1px;background-color: #fff;border: 1px solid #7da2d0;}
.vscroll .track {flex: 1;padding: 103px 1px 0;}
.vscroll .thumb {display: flex;align-items: center;justify-content: center;height: 304px;border: 1px solid #4a73b0;border-radius: 2px;background: linear-gradient(90deg, #fff, #e2eefb 50%, #b9d2f2);}
.vscroll .thumb i {width: 7px;height: 8px;background: repeating-linear-gradient(#7f93b5 0 1px, #fff 1px 2px);}
.tri {width: 0;height: 0;border: 4px solid transparent;}
.tri.up {border-bottom: 5px solid #29436f;border-top: 0;}
.tri.down {border-top: 5px solid #29436f;border-bottom: 0;}
.tri.left {border-right: 5px solid #29436f;border-left: 0;}
.tri.right {border-left: 5px solid #29436f;border-right: 0;}

/* sheet tabs */
.sheetbar {flex: none;display: flex;height: 17px;font-size: 12px;color: #1d4fae;background-color: #a9c9fb;border-top: 1px solid #8db0de;border-bottom: 1px solid #4f7ab4;}
.sheetbar > svg {height: 15px;background-color: #e3f8ff;}
.sheetbar > .white {background-color: #fff;}
.sheetbar > .end {background: none;}
.steps {display: flex;width: 59px;justify-content: space-around;background-color: #dff6ff;border-right: 1px solid #8db0de;}
.leaf {width: 109px;padding: 0 4px;justify-content: flex-start;background-color: #e3f8ff;}
.leaf.on {width: 158px;padding-left: 9px;font-weight: bold;background-color: #fff;}
.leaf.short {width: 90px;}
.leaf.new {width: 20px;padding: 0 2px;}
.hscroll {display: flex;flex: 1;max-width: 524px;margin-left: auto;padding-right: 20px;background-color: #78a4dc;}
.hscroll .split {width: 5px;background-color: #fff;border: 1px solid #8db0de;}
.hscroll button {width: 18px;}
.hscroll .track {flex: 1;padding-right: 72px;}
.hscroll .thumb {display: flex;align-items: center;justify-content: center;height: 15px;border: 1px solid #4a73b0;background: linear-gradient(#fff 40%, #c8daf2);}
.hscroll .thumb i {width: 8px;height: 7px;background: repeating-linear-gradient(90deg, #7f93b5 0 1px, #fff 1px 2px);}

/* status bar */
.status {flex: none;display: flex;align-items: center;height: 21px;color: #17305f;background: linear-gradient(#f4ffff, #c9f6fb 50%, #effeff);}
.ready {width: 43px;padding-left: 3px;line-height: 20px;border-right: 1px solid #a9cbea;}
.view {display: flex;align-items: center;height: 21px;margin-left: auto;padding: 0 5px 0 5px;border-left: 1px solid #7da2d0;background: linear-gradient(#e0f0ff, #b6d3f8 50%, #8db6f0);}
.modes {display: flex;height: 18px;border: 1px solid #7da2d0;background-color: #dfe9f5;}
.modes button {width: 18px;}
.modes .on {background-color: #ffe58a;}
.pc {width: 46px;text-align: center;}
.view input {appearance: none;width: 101px;height: 16px;background: linear-gradient(#5e7ba6, #5e7ba6) center / 100% 1px no-repeat;}
.view input::-webkit-slider-thumb {appearance: none;width: 9px;height: 12px;border: 1px solid #4b6790;border-radius: 1px 1px 5px 5px;background-color: #eef6ff;}

/* taskbar */
.taskbar {flex: none;display: flex;align-items: center;height: 30px;color: #fff;background: linear-gradient(#1c6cf0, #2f8bff 10%, #0b4fe4 35%, #0650f5 85%, #0a3cc0);}
.start {width: 92px;height: 30px;gap: 4px;padding-right: 16px;font-size: 16px;font-weight: bold;font-style: italic;border-radius: 0 10px 14px 0;background: linear-gradient(#2f8f2f, #5fc25a 12%, #2f9a2f 45%, #2a8c2a 85%, #1b661b);}
.launch {display: flex;gap: 7px;width: 195px;padding-left: 12px;}
.tasks {display: flex;gap: 3px;}
.task {width: 157px;height: 25px;gap: 3px;padding-left: 8px;justify-content: flex-start;border-radius: 3px;background: linear-gradient(#5ba6ff, #2f86fb 20%, #2b7df6);}
.task.on {background: linear-gradient(#0a34a8, #0b41c8 20%, #0a45d0);}
.lang {display: flex;align-items: center;gap: 11px;margin-left: auto;padding-right: 18px;}
.tray {display: flex;align-items: center;gap: 2px;height: 30px;padding: 0 11px 0 9px;border-left: 1px solid #0a3cb0;background: linear-gradient(#1ba0f5, #35bdff 10%, #14a0f0 40%, #18a4f4 85%, #0c78c8);}
.tray time {padding-left: 5px;}
```
